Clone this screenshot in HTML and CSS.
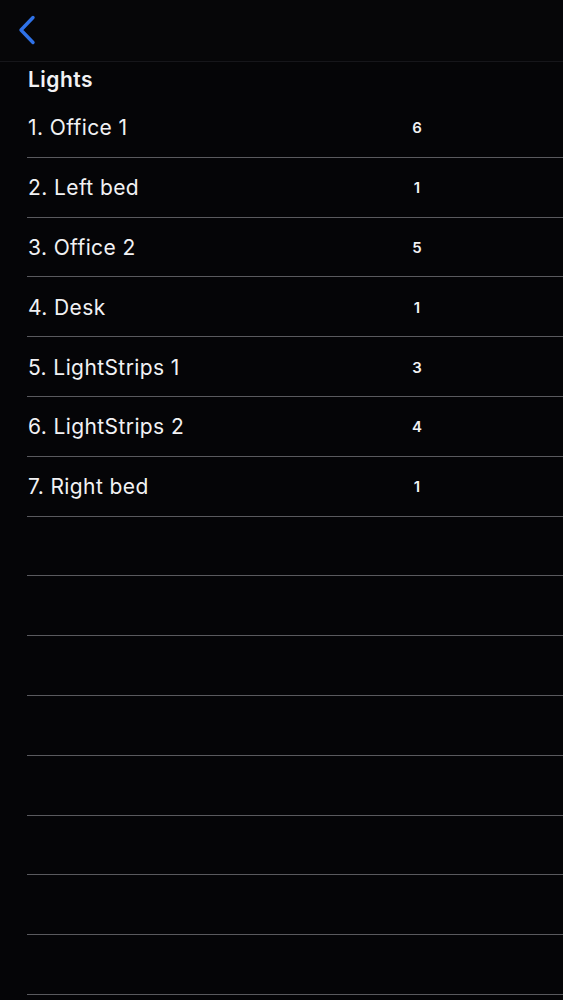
FILE: index.html
```html
<!doctype html>
<html lang="en">
    <head>
        <meta charset="UTF-8" />
        <meta name="viewport" content="width=device-width, initial-scale=1.0" />
        <title>Lights</title>
        <link rel="stylesheet" href="styles.css">
    </head>
    <body>
        <div class="nav-bar">
            <button class="back-button" aria-label="Back">
                <svg width="22" height="32" viewBox="0 0 22 32">
                    <path d="M16 2.5 L4 15 L16 27.5" fill="none" stroke="#2f72e8" stroke-width="3.4" stroke-linecap="round" stroke-linejoin="round" />
                </svg>
            </button>
        </div>
        <h2 class="section-title">Lights</h2>
        <ul class="light-list">
            <li class="light-row"><span class="light-name">1. Office 1</span><span class="light-count">6</span></li>
            <li class="light-row"><span class="light-name">2. Left bed</span><span class="light-count">1</span></li>
            <li class="light-row"><span class="light-name">3. Office 2</span><span class="light-count">5</span></li>
            <li class="light-row"><span class="light-name">4. Desk</span><span class="light-count">1</span></li>
            <li class="light-row"><span class="light-name">5. LightStrips 1</span><span class="light-count">3</span></li>
            <li class="light-row"><span class="light-name">6. LightStrips 2</span><span class="light-count">4</span></li>
            <li class="light-row"><span class="light-name">7. Right bed</span><span class="light-count">1</span></li>
            <li class="light-row"></li>
            <li class="light-row"></li>
            <li class="light-row"></li>
            <li class="light-row"></li>
            <li class="light-row"></li>
            <li class="light-row"></li>
            <li class="light-row"></li>
            <li class="light-row"></li>
        </ul>
    </body>
</html>
```

FILE: styles.css
```css
body {
    margin: 0;
    font-family: "Inter", "Liberation Sans", sans-serif;
    background-color: #050507;
    color: #f2f2f4;
    overflow: hidden;
}
.nav-bar {
    height: 61px;
    border-bottom: 1px solid #16161a;
    background: #060608;
    display: flex;
    align-items: center;
    padding-left: 17px;
}
.back-button {
    background: none;
    border: none;
    padding: 0;
    cursor: pointer;
    display: flex;
}
.section-title {
    margin: 0;
    height: 36px;
    padding-left: 28px;
    font-size: 21px;
    font-weight: 600;
    letter-spacing: 0.5px;
    line-height: 36px;
}
.light-list {
    list-style: none;
    margin: 0;
    padding: 0 0 0 27px;
}
.light-row {
    box-sizing: border-box;
    height: 59.8px;
    border-bottom: 1px solid #5a5a5e;
    display: flex;
    align-items: center;
    padding-top: 1px;
}
.light-name {
    width: 369px;
    padding-left: 1px;
    font-size: 21px;
    letter-spacing: 0.4px;
}
.light-count {
    width: 40px;
    text-align: center;
    font-size: 15px;
    font-weight: 600;
}
```
